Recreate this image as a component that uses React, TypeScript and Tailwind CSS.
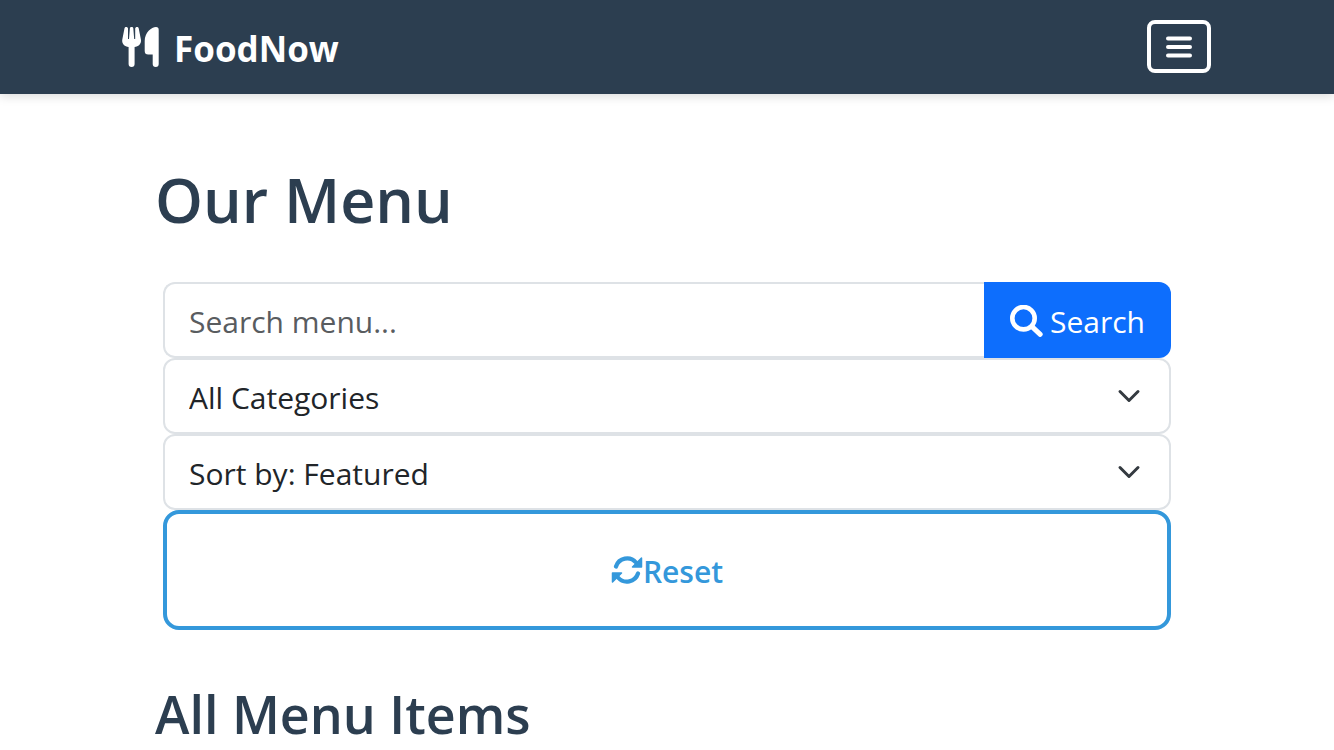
function UtensilsIcon() {
  return (
    <svg viewBox="0 0 37 40" className="h-10 w-[37px]" fill="currentColor" aria-hidden="true">
      <path d="M4.200 0C5.200 0 6 .7 6 1.600V12H7L7.900 1.300C8 .5 8.700 0 9.600 0s1.600.5 1.700 1.300L12.200 12h1V1.600C13.200.7 14 0 15 0c.8 0 1.500.5 1.700 1.200L18.800 12c1 4.200-1.600 7.300-6.200 8.100V37a3 3 0 0 1-6 0V20.100C2 19.300-.6 16.200.4 12L2.500 1.200C2.700.5 3.400 0 4.200 0Z" />
      <path d="M34 0a2.700 2.700 0 0 1 2.700 2.700V37a3 3 0 0 1-6 0V27.500h-4.500a3.500 3.500 0 0 1-3.500-3.500V14C22.700 5.500 29.500 0 34 0Z" />
    </svg>
  );
}

function MenuIcon() {
  return (
    <svg viewBox="0 0 26 22" className="h-[22px] w-[26px]" stroke="currentColor" strokeWidth="4" strokeLinecap="round" aria-hidden="true">
      <path d="M2 2.500h22M2 11h22M2 19.500h22" />
    </svg>
  );
}

function SearchIcon() {
  return (
    <svg viewBox="0 0 33 32" className="h-8 w-[33px]" fill="none" stroke="currentColor" strokeLinecap="round" aria-hidden="true">
      <circle cx="13.500" cy="13.200" r="11.200" strokeWidth="4.600" />
      <path d="m22.500 22.200 7.700 7.200" strokeWidth="5" />
    </svg>
  );
}

function ResetIcon() {
  return (
    <svg viewBox="0 0 32 28" className="h-7 w-8" fill="none" stroke="currentColor" strokeLinecap="round" aria-hidden="true">
      <path d="M5 10.500A11.700 11.700 0 0 1 25 6.500M27 17.500A11.700 11.700 0 0 1 7 21.500" strokeWidth="4.200" />
      <path
        d="M30.500 2v9H21.500zM1.500 26v-9H10.500z"
        fill="currentColor"
        strokeWidth="1.500"
        strokeLinejoin="round"
      />
    </svg>
  );
}

function Chevron() {
  return (
    <svg
      viewBox="0 0 16 16"
      className="pointer-events-none absolute right-[30px] top-1/2 size-6 -translate-y-1/2"
      fill="none"
      stroke="#343a40"
      strokeWidth="2"
      strokeLinecap="round"
      strokeLinejoin="round"
      aria-hidden="true"
    >
      <path d="m2 5 6 6 6-6" />
    </svg>
  );
}

function SelectField({ label, options }: { label: string; options: string[] }) {
  return (
    <div className="relative">
      <select
        aria-label={label}
        className="block h-[76px] w-full appearance-none rounded-xl border-2 border-[#dee2e6] bg-white px-6 pt-0.5 text-[30px] text-[#212529]"
      >
        {options.map((option) => (
          <option key={option}>{option}</option>
        ))}
      </select>
      <Chevron />
    </div>
  );
}

export default function App() {
  return (
    <div className="min-h-screen overflow-hidden bg-white font-['Open_Sans',sans-serif] text-[#212529]">
      <header className="relative bg-[#2c3e50] shadow-[0_2px_10px_rgba(0,0,0,0.15)]">
        <nav className="mx-auto flex max-w-[1090px] items-center justify-between pt-5 pr-px pb-[21px]">
          <a href="#" className="flex items-center gap-[15px] text-[35px] leading-10 font-bold text-white">
            <UtensilsIcon />
            <span className="pt-1">FoodNow</span>
          </a>
          <button
            type="button"
            aria-label="Toggle navigation"
            className="flex h-[53px] w-16 items-center justify-center rounded-lg border-4 border-white text-white"
          >
            <MenuIcon />
          </button>
        </nav>
      </header>

      <main className="mx-auto max-w-[1024px] pt-16">
        <h1 className="text-[61px] leading-[84px] font-semibold text-[#2c3e50]">Our Menu</h1>

        <form className="mt-10 px-2" onSubmit={(event) => event.preventDefault()}>
          <div className="flex">
            <input
              type="text"
              aria-label="Search menu"
              placeholder="Search menu..."
              className="h-[76px] min-w-0 flex-1 rounded-l-xl border-2 border-r-0 border-[#dee2e6] px-6 pt-0.5 text-[30px] placeholder:text-[#595c5f]"
            />
            <button
              type="submit"
              className="flex h-[76px] items-center gap-[7px] rounded-r-xl bg-[#0d6efd] px-[26px] pt-0.5 text-[30px] text-white"
            >
              <SearchIcon />
              Search
            </button>
          </div>
          <SelectField label="Category" options={["All Categories"]} />
          <SelectField label="Sort order" options={["Sort by: Featured"]} />
          <button
            type="reset"
            className="flex h-[120px] w-full items-center justify-center rounded-2xl border-4 border-[#3498db] text-[30px] font-semibold text-[#3498db]"
          >
            <ResetIcon />
            <span className="pt-0.5">Reset</span>
          </button>
        </form>

        <h2 className="mt-12 text-[52px] leading-[72px] font-semibold text-[#2c3e50]">All Menu Items</h2>
      </main>
    </div>
  );
}
